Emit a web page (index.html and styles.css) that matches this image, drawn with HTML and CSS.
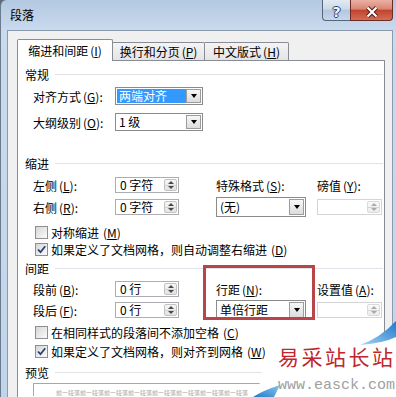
FILE: index.html
```html
<!DOCTYPE html>
<html lang="zh-CN">
<head>
<meta charset="utf-8">
<title>段落</title>
<link rel="stylesheet" href="styles.css">
</head>
<body>
<div class="window">
  <div class="titlebar">
    <span class="title">段落</span>
    <div class="caption">
      <div class="cap-btn help"><span>?</span></div>
      <div class="cap-btn close">
        <svg width="14" height="12" viewBox="0 0 14 12"><path class="x-out" d="M2.5 1.5 L11.5 10.5 M11.5 1.5 L2.5 10.5"/><path class="x-in" d="M2.5 1.5 L11.5 10.5 M11.5 1.5 L2.5 10.5"/></svg>
      </div>
    </div>
  </div>
  <div class="dlg">
    <div class="tabs">
      <div class="tab active">缩进和间距<span class="mn">(<u>I</u>)</span></div>
      <div class="tab t2">换行和分页<span class="mn">(<u>P</u>)</span></div>
      <div class="tab t3">中文版式<span class="mn">(<u>H</u>)</span></div>
    </div>
    <div class="panel">
      <div class="heading">常规</div>
      <div class="frow r-first">
        <span class="lbl">对齐方式<span class="mn">(<u>G</u>)</span>:</span>
        <div class="combo"><span class="val selected">两端对齐</span><span class="dd"></span></div>
      </div>
      <div class="frow r-second">
        <span class="lbl">大纲级别<span class="mn">(<u>O</u>)</span>:</span>
        <div class="combo"><span class="val">1 级</span><span class="dd"></span></div>
      </div>

      <div class="heading h-indent">缩进</div>
      <div class="grid g-indent">
        <span class="lbl">左侧<span class="mn">(<u>L</u>)</span>:</span>
        <div class="spin"><span class="val">0 字符</span><span class="arrows"><i class="up"></i><i class="down"></i></span></div>
        <span class="lbl">特殊格式<span class="mn">(<u>S</u>)</span>:</span>
        <span class="lbl">磅值<span class="mn">(<u>Y</u>)</span>:</span>
        <span class="lbl">右侧<span class="mn">(<u>R</u>)</span>:</span>
        <div class="spin"><span class="val">0 字符</span><span class="arrows"><i class="up"></i><i class="down"></i></span></div>
        <div class="combo wide"><span class="val">(无)</span><span class="dd"></span></div>
        <div class="spin off"><span class="val"></span><span class="arrows"><i class="up"></i><i class="down"></i></span></div>
      </div>
      <div class="check c1"><span class="box"></span>对称缩进<span class="mn">(<u>M</u>)</span></div>
      <div class="check c2"><span class="box"><svg width="11" height="11" viewBox="0 0 11 11"><path d="M2 5.5 L4.5 8.2 L9.2 2.2" class="tick"/></svg></span>如果定义了文档网格，则自动调整右缩进<span class="mn">(<u>D</u>)</span></div>

      <div class="heading h-space">间距</div>
      <div class="grid g-space">
        <span class="lbl">段前<span class="mn">(<u>B</u>)</span>:</span>
        <div class="spin"><span class="val">0 行</span><span class="arrows"><i class="up"></i><i class="down"></i></span></div>
        <span class="lbl">行距<span class="mn">(<u>N</u>)</span>:</span>
        <span class="lbl">设置值<span class="mn">(<u>A</u>)</span>:</span>
        <span class="lbl">段后<span class="mn">(<u>F</u>)</span>:</span>
        <div class="spin"><span class="val">0 行</span><span class="arrows"><i class="up"></i><i class="down"></i></span></div>
        <div class="combo wide"><span class="val">单倍行距</span><span class="dd"></span></div>
        <div class="spin off"><span class="val"></span><span class="arrows"><i class="up"></i><i class="down"></i></span></div>
      </div>
      <div class="check c3"><span class="box"></span>在相同样式的段落间不添加空格<span class="mn">(<u>C</u>)</span></div>
      <div class="check c4"><span class="box"><svg width="11" height="11" viewBox="0 0 11 11"><path d="M2 5.5 L4.5 8.2 L9.2 2.2" class="tick"/></svg></span>如果定义了文档网格，则对齐到网格<span class="mn">(<u>W</u>)</span></div>

      <div class="heading h-preview">预览</div>
      <div class="preview">前一段落前一段落前一段落前一段落前一段落前一段落前一段落前一段落</div>

      <div class="mark"></div>
    </div>
  </div>
</div>

<div class="wm">
  <svg width="146" height="79" viewBox="0 0 146 79">
    <defs>
      <linearGradient id="sw" x1="0" y1="1" x2="1" y2="0">
        <stop offset="0" stop-color="#a9d6f3"/>
        <stop offset="1" stop-color="#1c78cc"/>
      </linearGradient>
      <linearGradient id="sw2" x1="0" y1="1" x2="1" y2="0">
        <stop offset="0" stop-color="#1f7bcd"/>
        <stop offset="1" stop-color="#8cc6ee"/>
      </linearGradient>
    </defs>
    <path d="M18 22 L110 26 L146 10 L146 79 L7 79 Z" fill="#ffffff"/>
    <path d="M110 27 Q130 20 146 3 L146 19 Q134 25 110 27 Z" fill="url(#sw)"/>
    <path d="M3 79 Q14 72 30 67 L24 79 Z" fill="url(#sw2)"/>
  </svg>
  <div class="wm-cn">易采站长站</div>
  <div class="wm-url">www.easck.com</div>
</div>
</body>
</html>
```

FILE: styles.css
```css
* { box-sizing: border-box; }
html, body { margin: 0; padding: 0; }
body {
  width: 396px;
  height: 397px;
  overflow: hidden;
  position: relative;
  font-family: "Noto Sans CJK SC", "Noto Sans", sans-serif;
  font-size: 12px;
  color: #000;
  background: #5d6b7a;
}

.window {
  height: 397px;
  overflow: hidden;
  display: flex;
  flex-direction: column;
  background: linear-gradient(180deg, #b3c8e1 0, #c9daed 30px, #c1d5ea 100%);
  border-left: 1px solid #6c7b8b;
  border-top-left-radius: 6px;
}

.titlebar {
  height: 30px;
  flex-shrink: 0;
  display: flex;
  align-items: flex-start;
  justify-content: space-between;
  padding: 0 3px 0 9px;
}
.title { line-height: 30px; }
.caption { display: flex; }
.cap-btn {
  height: 21px;
  display: flex;
  align-items: center;
  justify-content: center;
  padding-top: 3px;
  border: 1px solid #56667b;
  border-top: none;
}
.help {
  width: 28px;
  border-right: none;
  border-bottom-left-radius: 4px;
  background: linear-gradient(180deg, #e2eaf3 0, #cbd9e9 45%, #b3c7de 52%, #c7d7ea 100%);
}
.help span {
  font: bold 14px/14px "DejaVu Sans", sans-serif;
  color: #f2f5f9;
  text-shadow: 1px 0 0 #34435a, -1px 0 0 #34435a, 0 1px 0 #34435a, 0 -1px 0 #34435a;
}
.close {
  width: 43px;
  border-color: #6b2a22;
  border-bottom-right-radius: 4px;
  background: linear-gradient(180deg, #eab0a4 0, #d98673 45%, #c2442e 52%, #d46d55 100%);
}
.x-out { stroke: #4a1a14; stroke-width: 4; fill: none; }
.x-in { stroke: #ffffff; stroke-width: 2.2; fill: none; }

.dlg {
  flex: 1;
  min-height: 0;
  overflow: hidden;
  display: flex;
  flex-direction: column;
  margin: 0 3px 0 6px;
  background: #f0f0f0;
  border: 1px solid #8a9bb0;
  border-bottom: none;
  padding: 8px 7px 0 9px;
}

.tabs {
  display: flex;
  align-items: flex-end;
  height: 22px;
  flex-shrink: 0;
  margin-bottom: -1px;
  position: relative;
  z-index: 1;
}
.tab {
  display: flex;
  align-items: center;
  justify-content: center;
  border: 1px solid #898c95;
  border-bottom: none;
  white-space: nowrap;
}
.tab.active {
  width: 96px;
  height: 22px;
  background: #fff;
  border-radius: 2px 2px 0 0;
  padding-bottom: 1px;
}
.tab.t2, .tab.t3 {
  height: 18px;
  margin-bottom: 1px;
  border-left: none;
  background: linear-gradient(180deg, #f4f4f4, #e4e4e4);
  border-radius: 0 2px 0 0;
}
.tab.t2 { width: 92px; }
.tab.t3 { width: 84px; }

.mn { margin-left: 2px; }
.mn u { text-decoration-thickness: 1px; text-underline-offset: 1px; }

.panel {
  flex: 1;
  min-height: 0;
  overflow: hidden;
  background: #fff;
  border: 1px solid #898c95;
  border-bottom: none;
  padding: 0 1px 0 7px;
  position: relative;
}

.heading {
  display: flex;
  align-items: center;
  height: 16px;
  gap: 6px;
  margin-top: 5px;
}
.heading::after {
  content: "";
  flex: 1;
  border-top: 1px solid #dfe3e8;
}
.h-indent { margin-top: 24px; }
.h-space { margin-top: 4px; }
.h-preview { margin-top: 6px; }

.frow {
  display: flex;
  align-items: center;
  height: 18px;
  padding-left: 8px;
}
.r-first { margin-top: 5px; }
.r-second { margin-top: 8px; }
.lbl { width: 82px; white-space: nowrap; }

.combo {
  display: flex;
  align-items: stretch;
  width: 88px;
  height: 18px;
  border: 1px solid #8b8b8b;
  padding: 1px;
  background: #fff;
}
.combo .val {
  flex: 1;
  padding-left: 2px;
  line-height: 14px;
  white-space: nowrap;
}
.combo .val.selected {
  background: #3399ff;
  color: #fff;
}
.combo .dd {
  width: 15px;
  border: 1px solid #9c9c9c;
  background: linear-gradient(180deg, #f7f7f7, #dcdcdc);
  display: flex;
  align-items: center;
  justify-content: center;
}
.combo .dd::before {
  content: "";
  border-left: 3.5px solid transparent;
  border-right: 3.5px solid transparent;
  border-top: 4px solid #000;
}
.combo.wide {
  width: 90px;
  height: 20px;
}
.combo.wide .val { line-height: 16px; }

.grid {
  display: grid;
  grid-template-columns: 82px 101px 101px 65px;
  align-items: center;
  padding-left: 8px;
}
.g-indent { grid-template-rows: 16px 20px; row-gap: 4px; margin-top: 6px; }
.g-space { grid-template-rows: 16px 20px; row-gap: 3px; margin-top: 5px; }

.spin {
  display: flex;
  align-items: stretch;
  width: 64px;
  height: 16px;
  border: 1px solid #abadb3;
  padding: 1px;
  background: #fff;
}
.spin .val {
  flex: 1;
  padding-left: 3px;
  line-height: 12px;
  white-space: nowrap;
}
.arrows {
  width: 13px;
  display: flex;
  flex-direction: column;
  border: 1px solid #c2c2c2;
  border-radius: 2px;
  background: linear-gradient(180deg, #f6f6f6, #e3e3e3);
}
.arrows i {
  flex: 1;
  display: flex;
  align-items: center;
  justify-content: center;
}
.arrows .up { border-bottom: 1px solid #d4d4d4; }
.arrows .up::before {
  content: "";
  border-left: 3px solid transparent;
  border-right: 3px solid transparent;
  border-bottom: 3px solid #4a4a4a;
}
.arrows .down::before {
  content: "";
  border-left: 3px solid transparent;
  border-right: 3px solid transparent;
  border-top: 3px solid #4a4a4a;
}
.spin.off {
  width: 65px;
  border-color: #d5d5d5;
}
.spin.off .arrows { border-color: #dadada; background: linear-gradient(180deg, #f9f9f9, #ededed); }
.spin.off .arrows .up::before { border-bottom-color: #a9a9a9; }
.spin.off .arrows .down::before { border-top-color: #a9a9a9; }

.check {
  display: flex;
  align-items: center;
  height: 14px;
  padding-left: 10px;
  gap: 2px;
  white-space: nowrap;
}
.check .box {
  width: 13px;
  height: 13px;
  border: 1px solid #8e8f8f;
  background: linear-gradient(135deg, #d6d6d6, #fbfbfb);
  display: flex;
  align-items: center;
  justify-content: center;
  margin-right: 1px;
}
.tick { fill: none; stroke: #2c3f73; stroke-width: 1.8; }
.c1 { margin-top: 8px; }
.c2 { margin-top: 3px; }
.c3 { margin-top: 5px; }
.c4 { margin-top: 5px; }

.preview {
  margin: 3px 0 0 8px;
  width: 336px;
  height: 13px;
  border: 1px solid #a7a7a7;
  border-bottom: none;
  padding: 5px 0 0 22px;
  font-size: 6px;
  line-height: 7px;
  color: #a8a8a8;
  white-space: nowrap;
  overflow: hidden;
}

.mark {
  position: absolute;
  left: 185px;
  top: 204px;
  width: 112px;
  height: 55px;
  border: 3px solid #b9454a;
}

.wm {
  position: absolute;
  left: 250px;
  top: 318px;
  width: 146px;
  height: 79px;
}
.wm svg { position: absolute; left: 0; top: 0; }
.wm-cn {
  position: relative;
  margin: 26px 0 0 28px;
  font-size: 21px;
  line-height: 24px;
  letter-spacing: 2.5px;
  color: #c0262d;
  white-space: nowrap;
}
.wm-url {
  position: relative;
  margin: 10px 0 0 28px;
  font-family: "Liberation Mono", monospace;
  font-size: 15px;
  line-height: 16px;
  color: #a0a0a0;
  white-space: nowrap;
}
```
